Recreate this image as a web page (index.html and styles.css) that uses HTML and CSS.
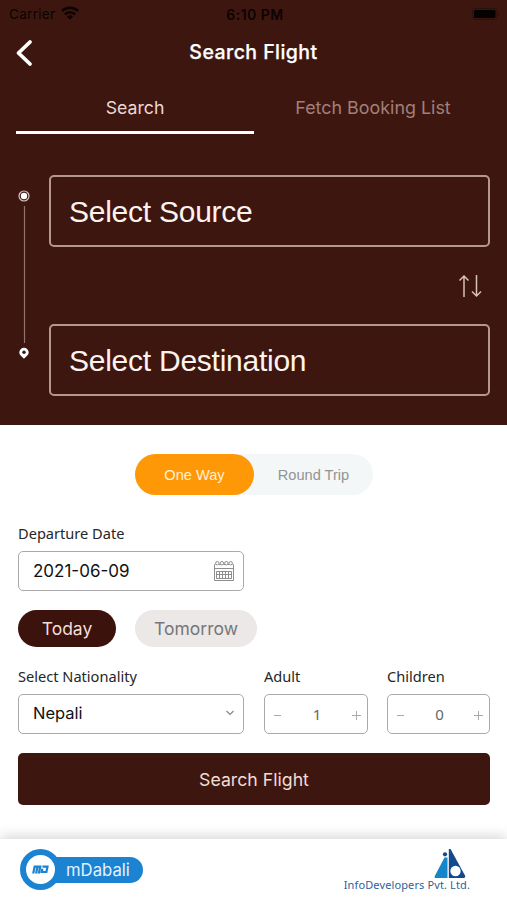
FILE: index.html
```html
<!DOCTYPE html>
<html lang="en">
<head>
<meta charset="utf-8">
<title>Search Flight</title>
<link rel="stylesheet" href="styles.css">
</head>
<body>
<header class="hero">
  <div class="status">
    <div class="carrier"><span>Carrier</span>
      <svg width="18" height="14" viewBox="0 0 18 14"><g fill="none" stroke="#0c0302" stroke-width="2.6"><path d="M.9 5.1a11.500 11.500 0 0 1 16.200 0"/><path d="M3.900 8.300a7.200 7.200 0 0 1 10.200 0"/></g><path d="M9 13.800 5.900 10.600a4.400 4.400 0 0 1 6.200 0Z" fill="#0c0302"/></svg>
    </div>
    <span class="clock">6:10 PM</span>
    <svg class="battery" width="29" height="12" viewBox="0 0 29 12"><rect x=".5" y=".5" width="24.5" height="11" rx="3" fill="none" stroke="#29100c"/><rect x="2" y="2" width="21.5" height="8" rx="1.5" fill="#050100"/><path d="M26.5 4q2 2 0 4Z" fill="#29100c"/></svg>
  </div>
  <div class="nav">
    <svg class="back" width="18" height="28" viewBox="0 0 18 28"><path d="M15 3 3.500 14 15 25" fill="none" stroke="#fff" stroke-width="3.8" stroke-linecap="round" stroke-linejoin="round"/></svg>
    <h1 class="title">Search Flight</h1>
  </div>
  <nav class="tabs">
    <a class="tab active"><span>Search</span></a>
    <a class="tab"><span>Fetch Booking List</span></a>
  </nav>
  <div class="route">
    <svg class="rail" width="14" height="172" viewBox="0 0 14 172"><circle cx="7" cy="7" r="5" fill="none" stroke="#d9c6c1" stroke-width="1.200"/><circle cx="7" cy="7" r="3.200" fill="#fff"/><path d="M7.500 17v137" stroke="#94736c" stroke-width="1.200"/><path d="M7 158.800a4.700 4.700 0 0 0-4.700 4.700c0 2.600 2.800 4.200 4.700 6.200 1.900-2 4.700-3.600 4.700-6.200A4.700 4.700 0 0 0 7 158.800Z" fill="#fff"/><circle cx="7" cy="163.300" r="1.700" fill="#3d1610"/></svg>
    <div class="places">
      <div class="place"><span>Select Source</span></div>
      <svg class="swap" width="24" height="24" viewBox="0 0 24 24"><path d="M6 23V2M1.500 6.500 6 2l4.500 4.500M18.500 1v21M14 17.500l4.500 4.500 4.500-4.500" fill="none" stroke="#d8c1ba" stroke-width="1.500"/></svg>
      <div class="place dest"><span>Select Destination</span></div>
    </div>
  </div>
</header>
<main class="form">
  <div class="toggle"><span class="way on"><span>One Way</span></span><span class="way"><span>Round Trip</span></span></div>
  <label class="label departure">Departure Date</label>
  <div class="input date"><span>2021-06-09</span>
    <svg width="22" height="22" viewBox="0 0 22 22" fill="none" stroke="#8d8d8d"><path d="M2.500 4.500h-1v16h19v-16h-1M6 4.500h1.500M10.500 4.500H12M14.800 4.500h1.500M1.500 8.500h19"/><circle cx="4.300" cy="3.200" r="1.700"/><circle cx="8.900" cy="3.200" r="1.700"/><circle cx="13.300" cy="3.200" r="1.700"/><circle cx="17.700" cy="3.200" r="1.700"/><path d="M3.500 11.500h15v7h-15zM3.500 14.500h15M6.500 11.500v7M9.500 11.500v7M12.500 11.500v7M15.500 11.500v7"/></svg>
  </div>
  <div class="days"><span class="day today"><span>Today</span></span><span class="day tomorrow"><span>Tomorrow</span></span></div>
  <div class="fields">
    <div class="field"><label class="label">Select Nationality</label>
      <div class="input nation"><span>Nepali</span><svg width="10" height="8" viewBox="0 0 10 8"><path d="m1.500 2 3.500 3.500L8.500 2" fill="none" stroke="#888" stroke-width="1.200"/></svg></div>
    </div>
    <div class="field"><label class="label">Adult</label>
      <div class="input stepper"><i class="minus"></i><b>1</b><i class="plus"></i></div>
    </div>
    <div class="field"><label class="label">Children</label>
      <div class="input stepper"><i class="minus"></i><b>0</b><i class="plus"></i></div>
    </div>
  </div>
  <button class="submit"><span>Search Flight</span></button>
</main>
<footer class="footer">
  <div class="mdabali">
    <span class="disc"><svg width="17" height="9" viewBox="0 0 17 9" fill="none" stroke="#1b83d2" stroke-width="2.200"><path d="M1.200 8.500 2.700 1.600H8.300L6.800 8.500M5.500 2 4.100 8.500M10.400 1.600H15.500L14.400 7H9.700l.7-3.200"/></svg></span>
    <span class="brand">mDabali</span>
  </div>
  <div class="info">
    <svg width="32" height="30" viewBox="0 0 32 30"><path d="M10.500 8.500H13.500V29H2Q0 29 .8 27Z" fill="#1686cb"/><path d="M14.800 0h1.700L31 26.500q.8 2.500-1.500 2.500H14.800Z" fill="#124a8b"/><circle cx="11" cy="5.300" r="2.100" fill="#124a8b"/><circle cx="21.500" cy="22" r="5.200" fill="#fff"/></svg>
    <span>InfoDevelopers Pvt. Ltd.</span>
  </div>
</footer>
</body>
</html>
```
FILE: styles.css
```css
* { box-sizing: border-box; }
body { margin: 0; width: 507px; height: 900px; display: flex; flex-direction: column; overflow: hidden; background: #fff; font-family: Inter, sans-serif; }
svg { display: block; flex: none; }
span { white-space: nowrap; }
.hero { height: 425px; background: #3e1610; color: #fff; }
.status { display: grid; grid-template-columns: 1fr auto 1fr; align-items: center; height: 28px; padding: 0 6px 0 9px; color: #0c0302; font-size: 13.5px; }
.carrier { display: flex; align-items: center; gap: 6px; letter-spacing: .3px; }
.carrier svg { height: 14px; margin-top: -2px; }
.clock { font-weight: 600; font-size: 14px; letter-spacing: .5px; }
.battery { justify-self: end; }
.nav { display: grid; grid-template-columns: 1fr auto 1fr; align-items: center; height: 49px; padding: 0 15px; }
.title { margin: -2px 0 0; font-size: 19.5px; font-weight: 500; letter-spacing: .45px; grid-column: 2; -webkit-text-stroke: .25px #fff; }
.tabs { display: grid; grid-template-columns: 238px 238px; margin-left: 16px; height: 57px; }
.tab { display: flex; align-items: center; justify-content: center; padding-top: 6px; border-bottom: 3px solid transparent; color: #a18078; font-size: 17.9px; }
.tab.active { color: #e9d9d4; border-color: #fff; font-size: 17.7px; }
.route { display: flex; padding: 41px 17px 0; }
.rail { margin-top: 14px; }
.places { flex: 1; margin-left: 18px; display: flex; flex-direction: column; }
.place { height: 72px; display: flex; align-items: center; padding: 2px 0 0 18px; border: 2px solid #b59790; border-radius: 5px; font-family: "Liberation Sans", sans-serif; font-size: 30px; letter-spacing: -.25px; color: #fdf3ee; }
.swap { margin: 27px 8px 26px auto; }
.form { flex: 1; padding: 29px 17px 0 18px; color: #222; }
.toggle { display: flex; width: 238px; height: 41px; margin: 0 0 0 117px; border-radius: 21px; background: #f3f7f8; font-family: "Liberation Sans", sans-serif; font-size: 14.6px; }
.way { flex: 1; display: flex; align-items: center; justify-content: center; color: #939393; }
.on { background: #ff9807; color: #fff0d8; border-radius: 21px; }
.label { display: block; height: 20px; line-height: 18px; font-family: "Noto Sans", sans-serif; font-size: 14.6px; color: #262626; }
.departure { margin-top: 29px; }
.input { display: flex; align-items: center; justify-content: space-between; height: 40px; margin-top: 7px; padding: 0 8px 0 14px; border: 1.5px solid #aaa; border-radius: 5px; color: #111; font-size: 16.5px; }
.date { width: 226px; font-size: 17px; }
.nation { padding-bottom: 2px; width: 226px; }
.days { display: flex; gap: 19px; margin-top: 19px; }
.day { height: 37px; border-radius: 19px; display: flex; align-items: center; justify-content: center; font-size: 17.5px; }
.today { width: 98px; background: #3b120c; color: #f0ded8; }
.tomorrow { width: 122px; background: #ebe8e7; color: #777; }
.fields { display: grid; grid-template-columns: 227px 104px 103px; justify-content: space-between; margin-top: 20px; }
.stepper { padding: 0 6px 0 7px; }
.stepper b { font: 15px "Noto Sans", sans-serif; color: #666; }
.minus, .plus { width: 10px; height: 11px; margin-top: 2px; background: linear-gradient(#aaa, #aaa) center / 7px 1px no-repeat; }
.plus { width: 9px; background: linear-gradient(#aaa, #aaa) center / 9px 1px no-repeat, linear-gradient(#aaa, #aaa) center / 1px 9px no-repeat; }
.submit { display: flex; align-items: center; justify-content: center; width: 100%; height: 52px; margin-top: 19px; padding: 0; border: 0; border-radius: 5px; background: #3e1610; color: #f0ddd4; font: 17.7px Inter, sans-serif; }
.footer { height: 61px; display: flex; justify-content: space-between; padding: 10px 37px 0 20px; background: #fff; box-shadow: 0 -2px 13px rgba(0,0,0,.18); }
.mdabali { display: flex; align-items: center; height: 41px; color: #fff; }
.disc { width: 41px; height: 41px; border: 6px solid #1b83d2; border-radius: 50%; background: #fff; display: flex; align-items: center; justify-content: center; z-index: 1; }
.brand { width: 96px; height: 26px; line-height: 27px; margin-left: -14px; padding-left: 19px; background: #1b83d2; border-radius: 0 13px 13px 0; font-size: 16.7px; color: #e4f3ff; }
.info { display: flex; flex-direction: column; align-items: flex-end; color: #315f9b; font: 11px "Noto Sans", sans-serif; letter-spacing: .12px; }
.info svg { margin-right: 4px; }
.info span { line-height: 11px; }
```
